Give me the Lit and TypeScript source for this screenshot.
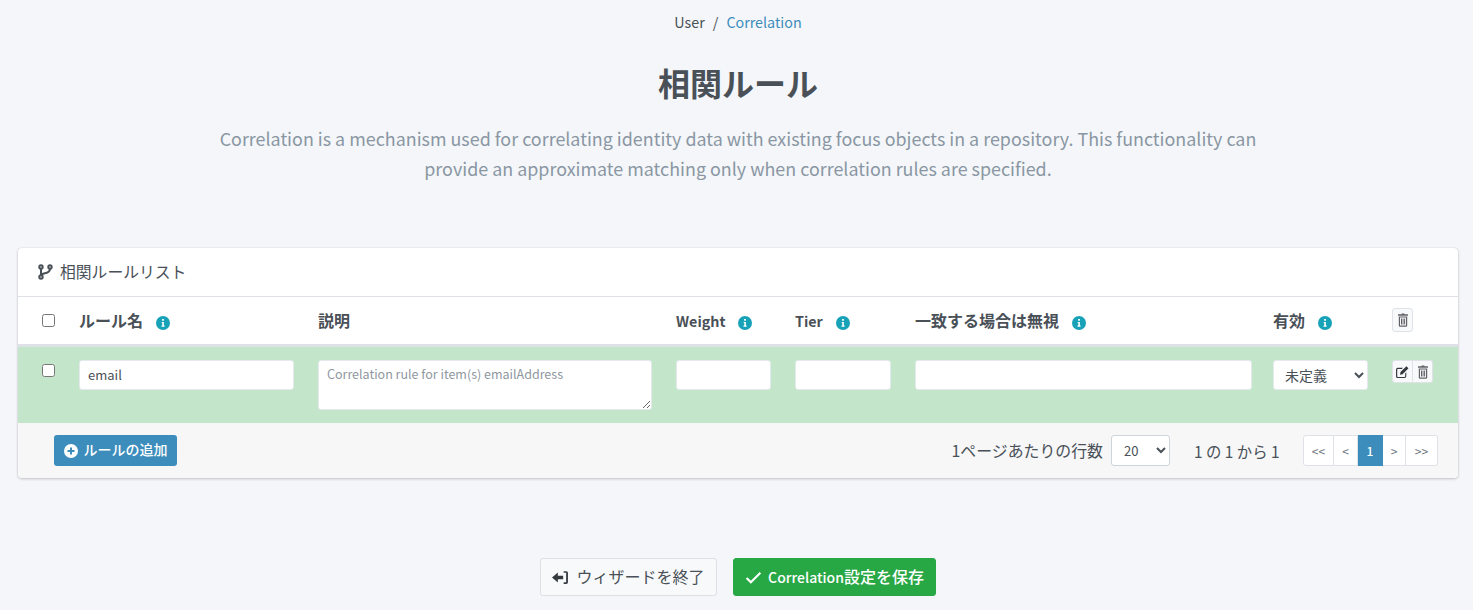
import { LitElement, html, css } from "lit";
import { customElement } from "lit/decorators.js";

const info = html`<svg class="info" viewBox="0 0 14 14"><circle cx="7" cy="7" r="7" fill="#17a2b8"/><path d="M6.100 3h1.800v1.700H6.100zM5.700 5.900h2.200v3.600h.7v1.200H5.500V9.500h.8V7.100h-.6z" fill="#fff"/></svg>`;
const trash = html`<svg class="trash" viewBox="1 0 10 14"><path d="M4.300 1.200 4.800.5h2.400l.5.700H11v1.500H1V1.200zM1.800 3.400h8.400V12.500a1.300 1.300 0 0 1-1.300 1.300H3.100a1.300 1.300 0 0 1-1.300-1.300zM3 4.500v8h6v-8zM4 5.500h1v6H4zM5.600 5.500h.9v6h-.9zM7.100 5.500h1v6h-1z" fill-rule="evenodd" fill="#5f6368"/></svg>`;
const edit = html`<svg class="edit" viewBox="0 0 14 13"><path d="M1.700 2H7.500L6.300 3.200H1.900a.6.600 0 0 0-.6.600v7.400c0 .3.300.6.600.6h7.400c.3 0 .6-.3.600-.6V8L11.100 6.800v4.700a1.700 1.700 0 0 1-1.700 1.500H1.700A1.700 1.700 0 0 1 0 11.300V3.700A1.700 1.700 0 0 1 1.700 2zM11.200.2l2.300 2.300-6.400 6.400-2.800.5.500-2.800z" fill="#343a40"/></svg>`;

@customElement("app-root")
export class AppRoot extends LitElement {
  static styles = css`
    :host { display: block; min-height: 610px; background: #f4f6f9; color: #495057; font-family: "Noto Sans CJK JP", "Noto Sans", sans-serif; font-size: 14px; overflow: hidden; }
    * { box-sizing: border-box; }
    .crumb { display: flex; justify-content: center; gap: 8px; padding: 12px 0 0 3px; height: 36px; line-height: 20px; font-size: 14.3px; color: #495057; }
    .crumb a { color: #3c8dbc; }
    h1 { margin: 22px 0 0; padding-left: 3px; height: 48px; line-height: 48px; text-align: center; font-size: 32px; font-weight: 700; color: #495057; }
    .desc { margin: 17px auto 0; padding-left: 3px; width: 1063px; text-align: center; font-size: 17.9px; line-height: 30px; color: #8a96a3; height: 60px; }
    .card { margin: 65px 15px 0 18px; background: #fff; border-radius: 4px; box-shadow: 0 0 1px rgba(0,0,0,.2), 0 1px 3px rgba(0,0,0,.2); overflow: hidden; }
    .head { height: 49px; display: flex; align-items: center; gap: 7px; padding: 0 0 1px 20px; border-bottom: 1px solid #dee2e6; font-size: 15.8px; color: #495057; }
    .branch { width: 15px; height: 16px; }
    .row { display: grid; grid-template-columns: 37px 239px 358px 119px 120px 358px 119px auto; padding-left: 24px; }
    .thead { height: 50px; align-items: center; border-bottom: 3px solid #dee2e6; font-weight: 700; font-size: 16px; color: #495057; }
    .thead > div { display: flex; align-items: center; gap: 13px; padding-bottom: 1px; }
    .thead .latin { font-size: 14.3px; }
    .info { width: 14px; height: 14px; margin-top: 5px; }
    .tbody { height: 76px; background: #c3e6cb; padding-top: 13px; align-items: start; }
    input[type=checkbox] { margin: 0; width: 13px; height: 13px; display: block; }
    .tbody input[type=checkbox] { margin-top: 4px; }
    .field { display: block; height: 30px; border: 1px solid #e5e8ec; border-radius: 3px; background: #fff; font: inherit; font-size: 13px; color: #495057; padding: 0 8px 2px; }
    .f-name { width: 215px; }
    .f-desc { width: 334px; height: 50px; padding: 4px 8px; resize: vertical; line-height: 18px; font-size: 12.5px; }
    .f-desc::placeholder { color: #8f979f; opacity: 1; }
    .f-w { width: 95px; }
    .f-t { width: 96px; }
    .f-i { width: 337px; }
    .f-s { width: 95px; padding: 0 0 0 7px; font-size: 14px; }
    .icon-btn { display: inline-flex; align-items: center; justify-content: center; background: #f8f9fa; border: 1px solid #dfe3e7; }
    .del-h { width: 21px; height: 24px; border-radius: 3px; }
    .trash { width: 10px; height: 14px; }
    .edit { width: 13px; height: 12px; }
    .group { display: flex; }
    .group .icon-btn { height: 23px; width: 21px; }
    .group .icon-btn:first-child { border-radius: 3px 0 0 3px; }
    .group .icon-btn:last-child { border-radius: 0 3px 3px 0; border-left: 0; width: 20px; }
    .foot { height: 55px; background: #f7f7f7; display: flex; align-items: center; padding: 0 20px 0 36px; font-size: 15.900px; color: #495057; }
    .add { height: 31px; width: 123px; display: flex; align-items: center; justify-content: center; gap: 6px; background: #3c8dbc; color: #fff; border: 0; border-radius: 3px; font: inherit; font-size: 14px; font-weight: 500; padding: 0; }
    .add svg { width: 14px; height: 14px; }
    .add span { margin-top: -3px; }
    .spacer { flex: 1; }
    .size { width: 59px; height: 31px; margin-left: 8px; border: 1px solid #ced4da; border-radius: 3px; background: #fff; font: inherit; font-size: 13px; color: #495057; padding-left: 8px; }
    .count { margin: 0 24px; width: 85px; white-space: nowrap; font-size: 15.400px; }
    .pages { display: flex; height: 31px; font-size: 12px; color: #6c757d; }
    .pages span { display: flex; align-items: center; justify-content: center; background: #fff; border: 1px solid #dee2e6; border-left: 0; }
    .pages span:first-child { border-left: 1px solid #dee2e6; border-radius: 3px 0 0 3px; width: 31px; }
    .pages span:last-child { border-radius: 0 3px 3px 0; width: 32px; }
    .pages .p2 { width: 24px; }
    .pages .on { width: 25px; background: #3c8dbc; border-color: #3c8dbc; color: #fff; font-weight: 500; }
    .pages .p4 { width: 23px; }
    .actions { display: flex; justify-content: center; gap: 16px; margin-top: 80px; padding-left: 3px; }
    .actions button { height: 38px; display: flex; align-items: center; justify-content: center; gap: 7px; border-radius: 3px; font: inherit; font-size: 16px; padding: 0; }
    .actions button span { margin-top: -2px; }
    .exit { width: 177px; background: #f8f9fa; border: 1px solid #dde0e4; color: #495057; }
    .actions .save { width: 203px; gap: 6px; background: #28a745; border: 1px solid #28a745; color: #fff; font-weight: 500; }
    .save b { font-size: 14px; font-weight: 500; }
    .save .lbl { display: flex; align-items: baseline; }
    .actions svg { width: 17px; height: 15px; }
  `;

  render() {
    return html`
      <div class="crumb"><span>User</span><span>/</span><a>Correlation</a></div>
      <h1>相関ルール</h1>
      <div class="desc">Correlation is a mechanism used for correlating identity data with existing focus objects in a repository. This functionality can provide an approximate matching only when correlation rules are specified.</div>
      <div class="card">
        <div class="head">
          <svg class="branch" viewBox="0 0 15 16"><g fill="none" stroke="#495057" stroke-width="2"><circle cx="3" cy="3" r="1.700"/><circle cx="3" cy="13" r="1.700"/><circle cx="12" cy="3" r="1.700"/><path d="M3 4.700v6.600M12 4.700c0 3.300-2.500 4-5 4.500-2 .4-4 1-4 2.300"/></g></svg>
          <span>相関ルールリスト</span>
        </div>
        <div class="row thead">
          <div><input type="checkbox" /></div>
          <div>ルール名 ${info}</div>
          <div>説明</div>
          <div><span class="latin">Weight</span> ${info}</div>
          <div><span class="latin">Tier</span> ${info}</div>
          <div>一致する場合は無視 ${info}</div>
          <div>有効 ${info}</div>
          <div><span class="icon-btn del-h">${trash}</span></div>
        </div>
        <div class="row tbody">
          <div><input type="checkbox" /></div>
          <div><input class="field f-name" value="email" /></div>
          <div><textarea class="field f-desc" placeholder="Correlation rule for item(s) emailAddress"></textarea></div>
          <div><input class="field f-w" /></div>
          <div><input class="field f-t" /></div>
          <div><input class="field f-i" /></div>
          <div><select class="field f-s"><option>未定義</option></select></div>
          <div class="group"><span class="icon-btn">${edit}</span><span class="icon-btn">${trash}</span></div>
        </div>
        <div class="foot">
          <button class="add"><svg viewBox="0 0 14 14"><circle cx="7" cy="7" r="7" fill="#fff"/><path d="M6 3.500h2V6h2.500v2H8v2.500H6V8H3.500V6H6z" fill="#3c8dbc"/></svg><span>ルールの追加</span></button>
          <div class="spacer"></div>
          <span>1ページあたりの行数</span>
          <select class="size"><option>20</option></select>
          <span class="count">1 の 1 から 1</span>
          <div class="pages"><span>&lt;&lt;</span><span class="p2">&lt;</span><span class="on">1</span><span class="p4">&gt;</span><span>&gt;&gt;</span></div>
        </div>
      </div>
      <div class="actions">
        <button class="exit"><svg viewBox="0 0 16 14"><path d="M0 7 5.500 2.300v3h5v3.400h-5v3zM11 1h2.500A1.500 1.500 0 0 1 15 2.500v9a1.500 1.500 0 0 1-1.500 1.500H11v-1.600h2.300V2.600H11z" fill="#343a40"/></svg><span>ウィザードを終了</span></button>
        <button class="save"><svg viewBox="0 0 16 14"><path d="M1.500 7.500 5.500 11.500 14.500 2.500" fill="none" stroke="#fff" stroke-width="2"/></svg><span class="lbl"><b>Correlation</b>設定を保存</span></button>
      </div>
    `;
  }
}
